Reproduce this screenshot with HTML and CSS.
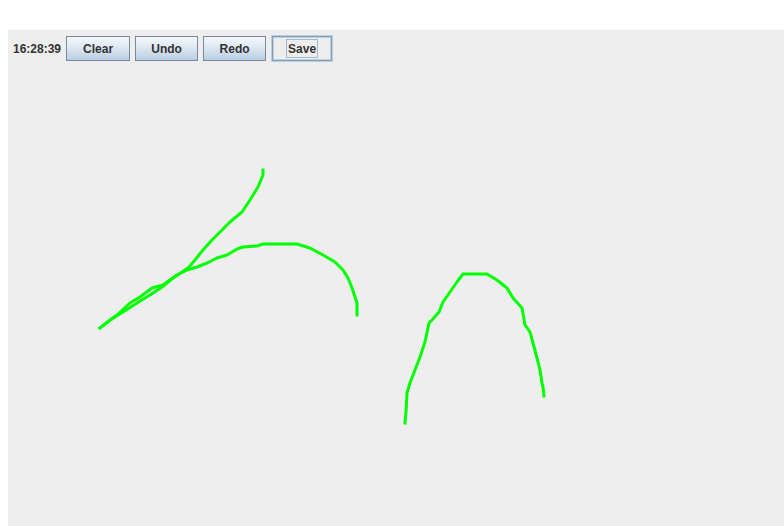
FILE: index.html
```html
<!DOCTYPE html>
<html>
<head>
<meta charset="utf-8">
<link rel="stylesheet" href="styles.css">
</head>
<body>
<div class="panel">
  <div class="toolbar">
    <span class="clock">16:28:39</span>
    <button class="btn w64">Clear</button>
    <button class="btn w63">Undo</button>
    <button class="btn w63">Redo</button>
    <button class="btn save"><span class="focus">Save</span></button>
  </div>
  <svg class="canvas" width="776" height="496" viewBox="8 30 776 496">
    <g fill="none" stroke="#00ff00" stroke-width="3" stroke-linejoin="round" stroke-linecap="square">
      <polyline points="263,170 263,175 258,187 250,200 242,212 230,222 220,232 212,240 203,250 195,260 188,268 173,278 162,287 150,295 137,303 123,312 110,320 100,328"/>
      <polyline points="100,328 117,315 130,303 140,297 152,288 163,285 177,275 187,270 197,267 207,263 217,258 227,255 237,249 243,247 257,246 263,244 297,244 310,248 323,255 335,262 343,270 348,278 352,288 355,297 357,303 357,315"/>
      <polyline points="405,423 406,412 407,393 410,383 415,370 420,357 425,342 429,323 433,319 439,312 443,302 450,292 457,282 463,274 487,274 497,280 507,288 513,298 522,308 525,325 530,332 533,343 537,358 540,370 542,383 543,387 544,396"/>
    </g>
  </svg>
</div>
</body>
</html>
```
FILE: styles.css
```css
html, body {
  margin: 0;
  padding: 0;
  background: #ffffff;
}
body {
  width: 784px;
  height: 526px;
  overflow: hidden;
  font-family: "Liberation Sans", Arial, sans-serif;
}
.panel {
  position: relative;
  margin: 30px 0 0 8px;
  width: 776px;
  height: 496px;
  background: #eeeeee;
}
.toolbar {
  position: relative;
  z-index: 1;
  display: flex;
  align-items: center;
  gap: 5px;
  padding: 6px 0 0 5px;
  height: 25px;
}
.clock {
  font-weight: bold;
  font-size: 12px;
  color: #333333;
}
.btn {
  box-sizing: border-box;
  height: 25px;
  padding: 0;
  margin: 0;
  border: 1px solid #7a8a99;
  background: linear-gradient(to bottom, #f4f7fb 0%, #e3ecf5 35%, #cddcec 70%, #b8cfe5 100%);
  font-family: "Liberation Sans", Arial, sans-serif;
  font-weight: bold;
  font-size: 12px;
  color: #333333;
  display: flex;
  align-items: center;
  justify-content: center;
}
.w64 { width: 64px; }
.w63 { width: 63px; }
.save {
  width: 60px;
  margin-left: 1px;
  background: #eeeeee;
  border: 1px solid #8a9cb0;
  box-shadow: 0 0 0 1px #b8cfe5, inset 0 0 0 1px #b8cfe5;
}
.focus {
  border: 1px solid #a3b8cc;
  padding: 2px 1px 1px;
  line-height: 14px;
}
.canvas {
  position: absolute;
  left: 0;
  top: 0;
}
```
